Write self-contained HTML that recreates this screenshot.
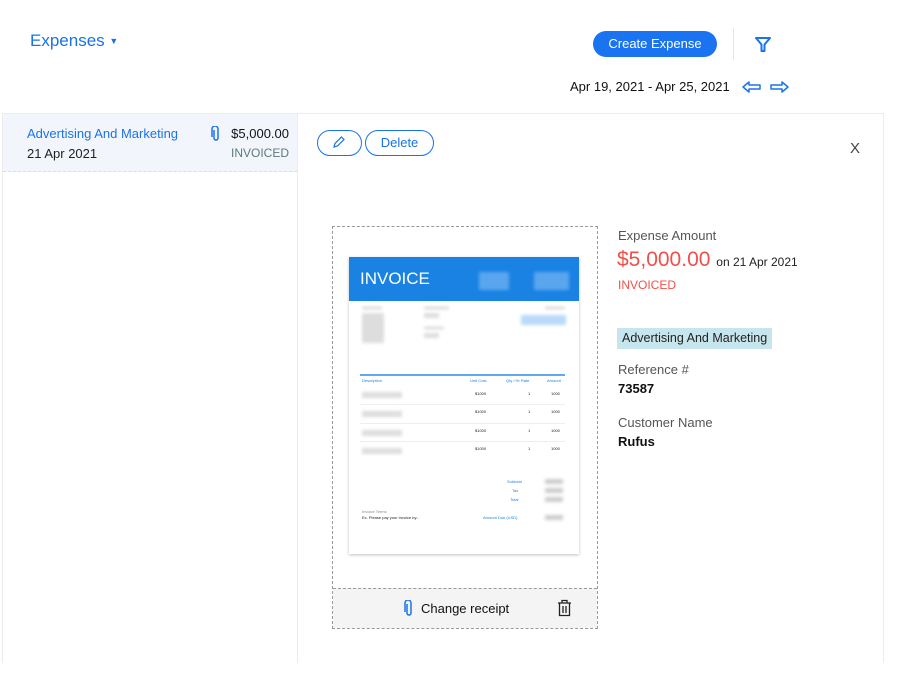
<!DOCTYPE html>
<html><head><meta charset="utf-8"><style>
*{margin:0;padding:0;box-sizing:border-box}
body{width:900px;height:674px;background:#fff;font-family:"Liberation Sans",sans-serif;position:relative;overflow:hidden;color:#222}
.a{position:absolute;white-space:nowrap}
.blur{position:absolute;background:#ccc;filter:blur(1.5px);border-radius:1px}
.t{position:absolute;font-size:4px;white-space:nowrap}
</style></head><body>
<div class="a" style="left:30px;top:31px;font-size:17px;color:#1a73e8">Expenses <span style="font-size:9px;vertical-align:2px">▼</span></div>
<div class="a" style="left:593px;top:31px;width:124px;height:26px;border-radius:13px;background:#1a73f0;color:#fff;font-size:13px;text-align:center;line-height:26px">Create Expense</div>
<div class="a" style="left:733px;top:28px;width:1px;height:32px;background:#e6e6e6"></div>
<svg class="a" style="left:754px;top:36px" width="18" height="17" viewBox="0 0 18 17"><path d="M2 2H16L10.5 8.5V15H7.5V8.5Z" fill="none" stroke="#1a73e8" stroke-width="2" stroke-linejoin="round"/></svg>
<div class="a" style="left:570px;top:79px;font-size:13px;color:#111">Apr 19, 2021 - Apr 25, 2021</div>
<svg class="a" style="left:741px;top:80px" width="50" height="14" viewBox="0 0 50 14"><path d="M2 7L8 2V5H19V9H8V12Z" fill="none" stroke="#1a73e8" stroke-width="1.5" stroke-linejoin="round"/><path d="M47 7L41 2V5H30V9H41V12Z" fill="none" stroke="#1a73e8" stroke-width="1.5" stroke-linejoin="round"/></svg>
<!-- panels -->
<div class="a" style="left:2px;top:113px;width:882px;height:550px;border:1px solid #ececec;border-bottom:none"></div>
<div class="a" style="left:297px;top:113px;width:1px;height:550px;background:#ececec"></div>
<div class="a" style="left:3px;top:114px;width:294px;height:58px;background:#f2f6fc;border-bottom:1px dashed #ddd"></div>
<div class="a" style="left:27px;top:126px;font-size:13px;color:#1a73e8">Advertising And Marketing</div>
<div class="a" style="left:27px;top:146px;font-size:13px;color:#222">21 Apr 2021</div>
<svg class="a" style="left:211px;top:126px" width="10" height="16" viewBox="0 0 10 16"><path d="M3 4V12A2 2 0 0 0 7 12V3A3 3 0 0 0 1 3V11" fill="none" stroke="#1a73e8" stroke-width="1.5"/></svg>
<div class="a" style="right:611px;top:126px;font-size:13px;color:#111">$5,000.00</div>
<div class="a" style="right:611px;top:146px;font-size:12px;color:#5e7a7a">INVOICED</div>
<div class="a" style="left:317px;top:130px;width:45px;height:26px;border:1.5px solid #1a73e8;border-radius:13px"></div>
<svg class="a" style="left:332px;top:135px" width="14" height="14" viewBox="0 0 14 14"><path d="M2 12L3 8.5L9.5 2L12 4.5L5.5 11Z" fill="none" stroke="#1a73e8" stroke-width="1.2"/></svg>
<div class="a" style="left:365px;top:130px;width:69px;height:26px;border:1.5px solid #1a73e8;border-radius:13px;color:#1a73e8;font-size:13px;text-align:center;line-height:23px">Delete</div>
<div class="a" style="left:850px;top:140px;font-size:15px;color:#444">X</div>
<!-- receipt -->
<div class="a" style="left:332px;top:226px;width:266px;height:403px;border:1px dashed #999"></div>
<div class="a" style="left:333px;top:588px;width:264px;height:40px;background:#f4f4f4;border-top:1px dashed #999"></div>
<svg class="a" style="left:404px;top:600px" width="10" height="17" viewBox="0 0 10 17"><path d="M3 4V13A2 2 0 0 0 7 13V3A3 3 0 0 0 1 3V12" fill="none" stroke="#1a73e8" stroke-width="1.5"/></svg>
<div class="a" style="left:421px;top:601px;font-size:13px;color:#111">Change receipt</div>
<svg class="a" style="left:557px;top:599px" width="15" height="18" viewBox="0 0 15 18"><path d="M1 4H14M5 4V1.5H10V4M2.5 4V16.5H12.5V4M6 7V14M9 7V14" fill="none" stroke="#222" stroke-width="1.3"/></svg>
<div class="a" style="left:349px;top:257px;width:230px;height:297px;background:#fff;box-shadow:0 1px 3px rgba(0,0,0,.25)">
 <div style="position:absolute;left:0;top:0;width:230px;height:44px;background:#1a82e2"></div>
 <div class="a" style="left:11px;top:12px;font-size:17px;color:#fff">INVOICE</div>
 <div class="blur" style="left:130px;top:15px;width:30px;height:18px;background:#5aa6ee"></div>
 <div class="blur" style="left:185px;top:15px;width:35px;height:18px;background:#5aa6ee"></div>
 <div class="blur" style="left:13px;top:50px;width:20px;height:2px"></div>
 <div class="blur" style="left:13px;top:56px;width:22px;height:30px;background:#ddd"></div>
 <div class="blur" style="left:75px;top:50px;width:25px;height:2px"></div>
 <div class="blur" style="left:75px;top:56px;width:15px;height:5px;background:#ddd"></div>
 <div class="blur" style="left:75px;top:70px;width:20px;height:2px"></div>
 <div class="blur" style="left:75px;top:76px;width:15px;height:5px;background:#ddd"></div>
 <div class="blur" style="left:196px;top:50px;width:20px;height:2px"></div>
 <div class="blur" style="left:172px;top:58px;width:45px;height:10px;background:#b9dafa"></div>
 <div style="position:absolute;left:11px;top:117px;width:205px;height:1.5px;background:#61a8ee"></div>
 <div class="t" style="left:13px;top:121px;color:#1a82e2">Description</div>
 <div class="t" style="left:121px;top:121px;color:#1a82e2">Unit Cost</div>
 <div class="t" style="left:157px;top:121px;color:#1a82e2">Qty / Hr Rate</div>
 <div class="t" style="left:198px;top:121px;color:#1a82e2">Amount</div>
 <div class="blur" style="left:13px;top:135px;width:40px;height:6px;background:#ddd"></div><div class="t" style="left:126px;top:134px">$1000</div><div class="t" style="left:179px;top:134px">1</div><div class="t" style="left:202px;top:134px">1000</div>
 <div style="position:absolute;left:11px;top:147px;width:205px;height:1px;background:#eee"></div>
 <div class="blur" style="left:13px;top:154px;width:40px;height:6px;background:#ddd"></div><div class="t" style="left:126px;top:152px">$1000</div><div class="t" style="left:179px;top:152px">1</div><div class="t" style="left:202px;top:152px">1000</div>
 <div style="position:absolute;left:11px;top:166px;width:205px;height:1px;background:#eee"></div>
 <div class="blur" style="left:13px;top:173px;width:40px;height:6px;background:#ddd"></div><div class="t" style="left:126px;top:171px">$1000</div><div class="t" style="left:179px;top:171px">1</div><div class="t" style="left:202px;top:171px">1000</div>
 <div style="position:absolute;left:11px;top:184px;width:205px;height:1px;background:#eee"></div>
 <div class="blur" style="left:13px;top:191px;width:40px;height:6px;background:#ddd"></div><div class="t" style="left:126px;top:189px">$1000</div><div class="t" style="left:179px;top:189px">1</div><div class="t" style="left:202px;top:189px">1000</div>
 <div class="t" style="left:158px;top:222px;color:#1a82e2">Subtotal</div><div class="blur" style="left:196px;top:222px;width:18px;height:5px"></div>
 <div class="t" style="left:163px;top:231px;color:#1a82e2">Tax</div><div class="blur" style="left:196px;top:231px;width:18px;height:5px"></div>
 <div class="t" style="left:161px;top:240px;color:#1a82e2">Total</div><div class="blur" style="left:196px;top:240px;width:18px;height:5px"></div>
 <div class="t" style="left:13px;top:252px;color:#888">Invoice Terms</div>
 <div class="t" style="left:13px;top:258px">Ex. Please pay your invoice by...</div>
 <div class="t" style="left:134px;top:258px;color:#1a82e2">Amount Due (USD)</div><div class="blur" style="left:196px;top:258px;width:18px;height:5px"></div>
</div>
<!-- details -->
<div class="a" style="left:618px;top:228px;font-size:13px;color:#555">Expense Amount</div>
<div class="a" style="left:617px;top:248px;font-size:21px;color:#f0504a">$5,000.00 <span style="font-size:12px;color:#222">on 21 Apr 2021</span></div>
<div class="a" style="left:618px;top:278px;font-size:12px;color:#f0504a">INVOICED</div>
<div class="a" style="left:617px;top:328px;height:21px;padding:0 5px;background:#c7e5ec;font-size:12.5px;line-height:21px;color:#222">Advertising And Marketing</div>
<div class="a" style="left:618px;top:362px;font-size:13px;color:#555">Reference #</div>
<div class="a" style="left:618px;top:381px;font-size:13px;font-weight:bold;color:#111">73587</div>
<div class="a" style="left:618px;top:415px;font-size:13px;color:#555">Customer Name</div>
<div class="a" style="left:618px;top:434px;font-size:13px;font-weight:bold;color:#111">Rufus</div>
</body></html>
